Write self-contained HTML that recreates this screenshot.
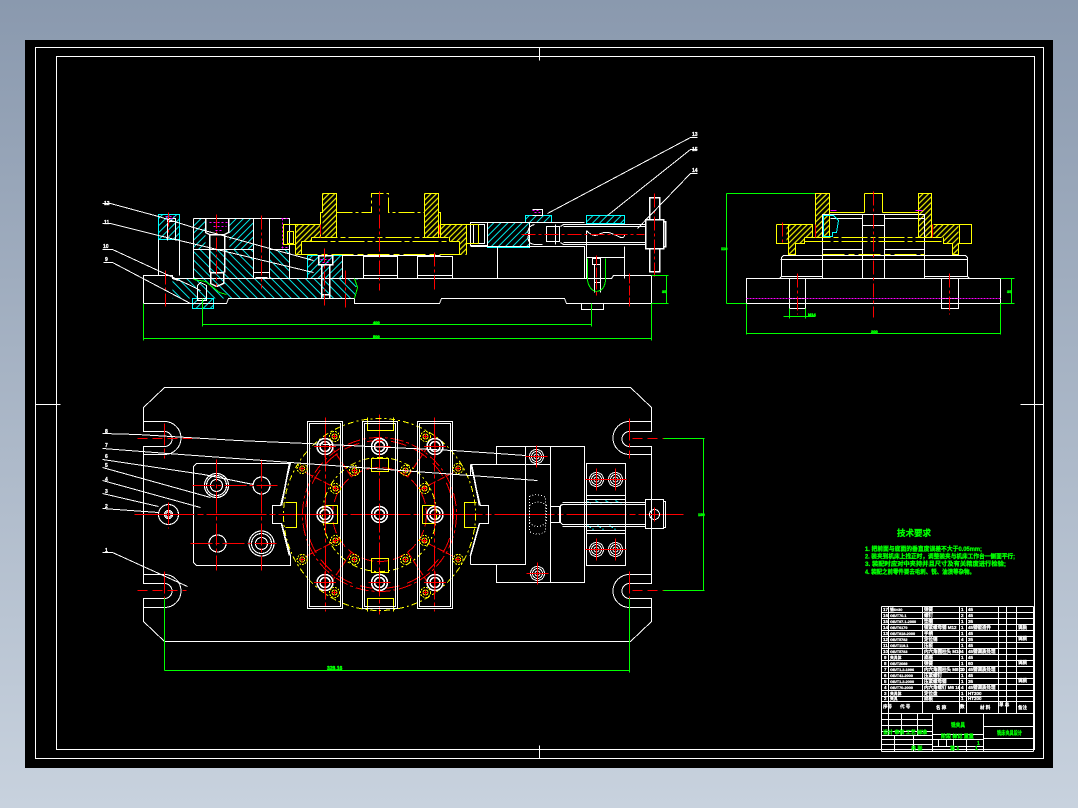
<!DOCTYPE html>
<html><head><meta charset="utf-8"><title>CAD</title>
<style>
html,body{margin:0;padding:0;width:1078px;height:808px;overflow:hidden;background:linear-gradient(#8a99ae,#c8d2de)}
svg{position:absolute;left:0;top:0}
text{font-family:"Liberation Sans","Noto Sans CJK SC",sans-serif;font-weight:bold}
.c{font-size:3.8px}
</style></head><body>
<svg width="1078" height="808" viewBox="0 0 1078 808" xmlns="http://www.w3.org/2000/svg">
<defs>
<pattern id="hc" width="5" height="5" patternUnits="userSpaceOnUse" patternTransform="rotate(45)"><line x1="1" y1="0" x2="1" y2="5" stroke="#00e8e8" stroke-width="1"/></pattern>
<pattern id="hb" width="6" height="6" patternUnits="userSpaceOnUse" patternTransform="rotate(-45)"><line x1="1" y1="0" x2="1" y2="6" stroke="#00e8e8" stroke-width="1"/></pattern>
<pattern id="hy" width="4" height="4" patternUnits="userSpaceOnUse" patternTransform="rotate(45)"><line x1="1" y1="0" x2="1" y2="4" stroke="#f0f000" stroke-width="1.2"/></pattern>
<g id="b"><circle r="8" fill="none" stroke="#fff" stroke-width="1.6"/><circle r="5" fill="none" stroke="#fff" stroke-width="1.6"/><path d="M-11 0H11M0-11V11" stroke="#f00"/></g>
<g id="s"><circle r="5" fill="none" stroke="#ff0" stroke-dasharray="2 1"/><circle r="2.5" fill="none" stroke="#ff0"/><path d="M-3 0H3M0-3V3" stroke="#f00"/></g>
<g id="m"><circle r="7" fill="none" stroke="#fff"/><circle r="5" fill="none" stroke="#fff"/><circle r="2.5" fill="none" stroke="#fff"/><path d="M-11 0H11M0-11V11" stroke="#f00"/></g>
</defs>
<rect x="25" y="40" width="1028" height="728" fill="#000"/>
<g transform="translate(.5 .5)" fill="none" stroke="#fff" shape-rendering="crispEdges">
<!-- frames -->
<rect x="35" y="47" width="1008" height="711"/>
<rect x="56" y="56" width="978" height="693"/>
<path d="M539 47V60M539 745V758M35 404H60M1020 404H1043"/>

<!-- SECTION VIEW: hatches -->
<g stroke="none">
<path fill="url(#hb)" d="M172 278H357L354 298H172ZM193 249H253V278H193ZM269 249H289V278H269Z"/>
<path fill="url(#hc)" d="M193 218H205V249H193ZM229 218H253V249H229Z"/>
<path fill="url(#hc)" d="M158 214H179V239H158ZM192 298H213V308H192ZM307 255H342V278H307ZM487 222H529V247H487ZM525 215H551V222H525ZM586 215H624V223H586Z"/>
<path fill="url(#hy)" d="M322 193H336V237H322ZM424 193H438V237H424ZM295 224H320V237H311V241H301V254H295ZM440 224H466V254H459V241H449V237H440Z"/>
<path fill="url(#hy)" d="M815 193H829V237H815ZM918 193H931V237H918ZM786 224H812V237H804V243H795V254H788V243H786ZM933 224H958V254H952V243H943V237H933Z"/>
</g>
<!-- section cyan outlines -->
<path stroke="#0ff" d="M158 214H179V239H158ZM192 298H213V308H192ZM193 218H205M229 218H253M307 255V278M342 255V278M307 255H342M487 222H529V247H487ZM525 215H551V222H525ZM586 215H624V223H586Z"/>
<!-- section white -->
<path d="M143 303H226L228 298H354V303H439L441 298H564L566 303H651V275H613L611 278H172V275H143Z M143 275V303"/>
<path d="M158 239V275M179 239V275M193 218H289V278M193 218V278M193 249H253M269 249H289M253 218H269V278H253ZM253 272H269M255 277H267"/>
<path stroke-width="1.5" d="M205 218V232L209 234H224L228 232V218M209 234V272M224 234V272M210 272H223M210 271V283L216 286L223 283V271"/>
<path d="M167 218H175V221H167ZM167 222V240M175 222V240"/>
<path stroke-width="1.5" d="M318 255H332V264H318ZM321 264V298M329 264V298M321 294H329"/>
<path d="M200 282L197 285V300H206V285ZM197 298H206"/>
<path d="M342 278V255H440M363 278V256H397V278M363 275H397M417 278V256H452V278M417 275H452"/>
<path d="M470 222H487V245H470ZM473 224H484V243H473ZM470 246H584V278M487 222H584M497 246V278M529 222V247M546 226H559V241H546Z"/>
<path d="M534 224Q526 226 528 234Q526 243 534 244H542M555 224V244"/>
<path stroke-width="1" d="M560 226L563 224H645M560 242L563 244H645M563 226H645M563 242H645M586 230V278M624 246V278M586 257H624"/>
<path d="M586 230Q592 237 598 234T608 232T618 236T624 234"/>
<path stroke-width="1.5" d="M645 219H663V248H645ZM649 197H659V219H649ZM649 248H659V271H649ZM663 221H665V246H663Z"/>
<path d="M592 258H600V264H592ZM594 264V292M600 264V292M594 282H600M532 209H542V215H532"/>
<path stroke="#0f0" d="M587 258V280Q589 290 596 291Q604 290 605 280V258"/>
<path d="M172 278L178 280M581 303V309H603V303"/>
<path stroke="#0f0" d="M193 279L205 281L219 292L226 294M354 278L357 287L354 298"/>
<!-- section yellow -->
<g stroke="#ff0">
<path stroke-width="1.3" d="M322 193H336V237M322 193V212H320V237M424 193H438V212H440V237M424 193V237M438 193V237"/>
<path stroke-width="1.3" d="M336 212H371V193H388V212H424" stroke-dasharray="16 3 3 3"/>
<path stroke-width="1.3" d="M311 237H449M301 241H459" stroke-dasharray="26 3 5 3"/>
<path stroke-width="1.3" d="M295 254H466" stroke-dasharray="22 4 6 4"/>
<path stroke-width="1.3" d="M301 241V254M295 224H320M295 244V254M311 237V241M449 237V241M459 241V254M466 224V254M440 224H466M283 224H295V244H283ZM287 231H293V243H287ZM466 224H478M466 243H478M478 224V243"/>
</g>
<g stroke="#f0f" stroke-dasharray="2 2"><path d="M281 218H288M281 247H288M282 218V248M209 222H228M213 226H226M215 230H222M320 259H330M322 262H330"/><path d="M532 210H540M534 212H540"/><path d="M166 218H174M165 216H174"/></g>
<g stroke="#f00"><path d="M168 212V236M216 214V286M261 215V288M324 248V305M379 191V290M345 270V309M434 252V292M165 270V306" stroke-dasharray="14 3 3 3"/><path d="M521 234H644" stroke-dasharray="14 3 3 3"/><path d="M654 193V276" stroke-dasharray="14 3 3 3"/><path d="M596 255V295M629 273V306M320 224V237M439 224V237" stroke-dasharray="10 2"/></g>
<!-- section leaders -->
<path d="M102 203H110L158 216L193 227L313 260M102 223H110L158 235L313 272M102 249H112L190 285L200 290M103 262H112L190 303M697 137H690L547 213M697 149H690L607 215M697 173H690L637 228"/>
<!-- section dims -->
<path stroke="#0f0" d="M202 298V326M202 324H591M591 303V326M143 303V340M143 338H651M651 303V340M651 275H668M651 303H668M666 275V303M726 193H820M726 303H746M726 193V303"/>

<!-- SIDE VIEW -->
<path d="M746 303V278H779L781 276V257L783 255H965L967 257V276L969 278H1000V303ZM780 259H967M781 276H822M924 276H967M746 278H1000"/>
<path d="M822 214H924V278H822ZM862 214H884V278H862ZM862 225H884M822 249H862M884 249H924M830 218H862M884 218H924"/>
<path d="M789 278V308H805V278M941 278V308H958V278M789 298H805M941 298H958"/>
<path stroke="#f0f" stroke-dasharray="2 1" d="M746 298H1000"/>
<g stroke="#ff0" stroke-width="1.3">
<path d="M815 193H829V237H815ZM815 193V212M918 193H931V237H918ZM864 193H882V212M864 193V212M829 212H864M882 212H918" stroke-dasharray="none"/>
<path d="M804 237H943M804 241H943" stroke-dasharray="26 3 5 3"/>
<path d="M822 254H924" stroke-dasharray="22 4 6 4"/>
<path d="M776 224H812V237M776 224V243H788V254H795V243H804V237M933 224H971V243H958V254H952V243H943V237M788 224V243M959 224V243"/>
</g>
<path stroke="#0ff" d="M823 215H833L838 220L836 232L832 232V236H823Z"/>
<g stroke="#f0f"><path d="M830 210H836M915 210H922"/></g>
<g stroke="#f00"><path d="M873 191V317M797 273V314M949 273V314M782 222V245M815 224V237M932 224V237" stroke-dasharray="14 3 3 3"/></g>
<path stroke="#0f0" d="M746 303V334M746 333H1000M1000 303V334M789 308V318M805 308V318M783 316H815M1000 278H1014M1000 303H1014M1011 278V303"/>

<!-- PLAN VIEW -->
<path d="M164 387H630L651 407V431H629M629 446H651V583H629M629 598H651V621L630 641H164L143 621V598H164M164 583H143V446H164M164 431H143V407L164 387"/>
<path d="M143 421H164A16.500 16.500 0 0 1 164 454H143M143 574H164A16.500 16.500 0 0 1 164 607H143"/>
<path d="M164 431A7.500 7.500 0 0 1 164 446M164 583A7.500 7.500 0 0 1 164 598"/>
<path d="M651 421H629A16.500 16.500 0 0 0 629 454H651M651 574H629A16.500 16.500 0 0 0 629 607H651"/>
<path d="M629 431A7.500 7.500 0 0 0 629 446M629 583A7.500 7.500 0 0 0 629 598"/>
<path d="M196 463H290L280 505H272V523H281L290 555V565H196L193 562V466Z"/>
<g stroke-width="1.2"><circle cx="216" cy="485" r="12"/><circle cx="216" cy="485" r="10"/><circle cx="216" cy="485" r="6"/><circle cx="261" cy="485" r="8.500"/><circle cx="217" cy="543" r="8.500"/><circle cx="261" cy="543" r="12.500"/><circle cx="261" cy="543" r="10"/><circle cx="261" cy="543" r="6"/><circle cx="168" cy="514" r="10"/><circle cx="168" cy="514" r="4"/><circle cx="168" cy="514" r="2.500"/></g>
<!-- center red/yellow -->
<g stroke="#f00">
<circle cx="379" cy="514" r="77" stroke-dasharray="13 3 3 3"/>
<circle cx="379" cy="514" r="74" stroke-dasharray="16 8"/>
<circle cx="379" cy="514" r="47" stroke-dasharray="12 4"/>
<path d="M330 445L352 478M428 445L406 478M330 583L352 550M428 583L406 550M305 472L340 490M453 472L418 490M305 556L340 538M453 556L418 538" stroke-dasharray="8 2"/>
<path d="M134 514H683" stroke-width="1.200" stroke-dasharray="60 3 6 3"/>
<path d="M379 414V614M325 417V611M434 417V611M216 459V570M261 459V570M168 502V528M192 485H277M190 543H278M164 423V458M164 571V606M629 418V458M629 571V606" stroke-dasharray="22 3 4 3"/>
<path d="M137 438H198M137 590H186M632 438H664M632 590H664" stroke-dasharray="10 5"/>
</g>
<g stroke="#ff0">
<circle cx="379" cy="514" r="96" stroke-dasharray="6 3 2 3"/>
<circle cx="379" cy="514" r="57" stroke-dasharray="6 3 2 3"/>
<path stroke-width="1.200" d="M367 417V430H393V417M367 611V598H393V611M325 505H337V523H325M434 505H422V523H434M371 458H388V471H371ZM371 558H388V572H371ZM285 502H296V527H285M476 502H464V527H476"/>
</g>
<path stroke-width="1.300" d="M307 421H342V608H307ZM309 423H340V606H309ZM362 421H397V608H362ZM364 423H395V606H364ZM417 421H452V608H417ZM419 423H450V606H419Z"/>
<g stroke-width="1.600"><path d="M289 463L281 505M281 523L289 555M471 464L479 505M479 523L470 555"/></g>
<use href="#b" x="324.500" y="446"/><use href="#b" x="379" y="446"/><use href="#b" x="434.500" y="446"/>
<use href="#b" x="324.500" y="514"/><use href="#b" x="379" y="514"/><use href="#b" x="434.500" y="514"/>
<use href="#b" x="324.500" y="582"/><use href="#b" x="379" y="582"/><use href="#b" x="434.500" y="582"/>
<use href="#s" x="301.700" y="468"/><use href="#s" x="457.700" y="468"/><use href="#s" x="301.700" y="559"/><use href="#s" x="457.700" y="559"/>
<use href="#s" x="334" y="436"/><use href="#s" x="425" y="436"/><use href="#s" x="334" y="592"/><use href="#s" x="425" y="592"/>
<use href="#s" x="354" y="470"/><use href="#s" x="405" y="470"/><use href="#s" x="354" y="559"/><use href="#s" x="405" y="559"/>
<use href="#s" x="335" y="488"/><use href="#s" x="424" y="488"/><use href="#s" x="335" y="540"/><use href="#s" x="424" y="540"/>
<!-- right side plan -->
<path d="M496 464V446H584V582H496V564M470 464H525M470 564H525V446M550 446V582M525 464H550" />
<path d="M470 464L480 505H488V523H479L470 555V564M470 464V475"/>
<path stroke-dasharray="1 2" d="M529 496Q537 492 545 497V531Q537 536 529 531ZM529 505Q537 498 546 505V522Q537 530 529 522Z"/>
<path d="M550 506H559V522H550ZM586 463H625V565H586ZM586 495H625M586 499H625M586 530H625M586 533H625"/>
<path stroke="#0ff" stroke-dasharray="4 2" d="M587 501L593 504M595 500L601 504M605 500L611 504M615 500L621 504M587 525L593 529M597 525L603 529M609 525L615 529"/>
<path stroke-width="1.300" d="M560 505L562 504H645V524H562L560 522ZM562 502H645M562 526H645M645 499H663V528H645ZM663 501H665V527H663"/>
<circle cx="654" cy="514" r="5"/>
<use href="#m" x="536" y="456"/><use href="#m" x="537" y="573"/>
<use href="#m" x="596" y="479"/><use href="#m" x="615" y="479"/><use href="#m" x="596" y="549"/><use href="#m" x="615" y="549"/>
<path stroke="#f00" d="M654 507V521"/>
<!-- plan leaders -->
<path d="M102 433L137 434L237 440L307 443L452 450L497 453L525 455M102 448L167 453L290 462L497 477L537 480M102 459L203 474L253 484M102 467L210 497M102 480L200 507M102 493L158 506M102 508L158 512M102 552H112L187 586"/>
<!-- plan dims -->
<path stroke="#0f0" stroke-width="1.200" d="M164 598V670M164 670H629M629 598V672M663 438H704M663 590H704M703 438V590"/>

<!-- TABLE -->
<path d="M881 606H1033M881 612H1033M881 618H1033M881 624H1033M881 630H1033M881 636H1033M881 642H1033M881 648H1033M881 654H1033M881 660H1033M881 666H1033M881 672H1033M881 678H1033M881 684H1033M881 690H1033M881 696H1033M881 701H1033M881 713H1033"/>
<path d="M881 606V751M888 606V713M922 606V713M959 606V713M966 606V713M998 606V713M1006 606V713M1016 606V713M1033 606V751M881 751H1033"/>
<path d="M932 713V751M983 713V751M983 726H1033M983 738H1033M932 734H983M932 739H983M932 746H983M938 739V746M946 739V746M953 739V751M966 739V751M881 719H932M881 725H932M881 731H932M881 735H932M881 739H932M881 744H932M888 713V735M901 713V735M917 713V735M913 735V751M894 735V751"/>
</g>

<!-- TEXT -->
<g fill="#fff" stroke="#fff" stroke-width=".3" font-size="5">
<text x="104" y="205">12</text><text x="104" y="224">11</text><text x="103" y="248">10</text><text x="105" y="261">9</text>
<text x="692" y="136">13</text><text x="692" y="151">15</text><text x="692" y="172">14</text>
<text x="105" y="433">8</text><text x="105" y="447">7</text><text x="105" y="458">6</text><text x="105" y="467">5</text><text x="105" y="481">4</text><text x="105" y="493">3</text><text x="105" y="508">2</text><text x="105" y="552">1</text>
</g>
<g fill="#0f0" stroke="#0f0" stroke-width=".5" font-size="4">
<text x="373" y="324">400</text><text x="373" y="338">500</text><text x="662" y="293">35</text>
<text x="721" y="250">110</text><text x="1007" y="293">35</text><text x="808" y="316">M14</text><text x="871" y="333">200</text>
<text x="327" y="670" font-size="5">328.16</text><text x="698" y="516">150</text>
</g>
<g fill="#0f0" stroke="#0f0" stroke-width=".3">
<text x="897" y="536" font-size="8.500">技术要求</text>
<g font-size="6">
<text x="865" y="551" textLength="117" lengthAdjust="spacingAndGlyphs">1. 把前面与底面的垂直度误差不大于0.05mm;</text>
<text x="865" y="558.500" textLength="150" lengthAdjust="spacingAndGlyphs">2. 装夹到机床上找正时，调整装夹与机床工作台一侧面平行;</text>
<text x="865" y="566" textLength="141" lengthAdjust="spacingAndGlyphs">3. 装配时应对中夹持并且尺寸及有关精度进行检验;</text>
<text x="865" y="574" textLength="110" lengthAdjust="spacingAndGlyphs">4. 装配之前零件要去毛刺、锐、油渍等杂物。</text>
</g>
<text x="951" y="727" font-size="5.500" textLength="14" lengthAdjust="spacingAndGlyphs">铣夹具</text>
<text x="997" y="735" font-size="5.500" textLength="25" lengthAdjust="spacingAndGlyphs">铣床夹具设计</text>
<text x="883" y="734" font-size="5">设计 审核 工艺 标准</text>
<text x="941" y="738" font-size="5">阶段 标记 重量</text>
<text x="977" y="745" font-size="5">1</text>
<text x="911" y="750" font-size="5">共 张</text><text x="950" y="750" font-size="5">第 1</text><text x="975" y="750" font-size="5">1</text>
</g>
<g fill="#fff" stroke="#fff" stroke-width=".25" font-size="4.5">
<text x="883" y="611">17</text><text class="c" x="890" y="611">销6×30</text><text x="924" y="611">弹簧</text><text x="961" y="611">1</text><text x="968" y="611">45</text>
<text x="883" y="617">16</text><text class="c" x="890" y="617">GB/T70.1</text><text x="924" y="617">螺钉</text><text x="961" y="617">2</text><text x="968" y="617">45</text>
<text x="883" y="623">15</text><text class="c" x="890" y="623">GB/T97.1-2000</text><text x="924" y="623">垫圈</text><text x="961" y="623">1</text><text x="968" y="623">35</text>
<text x="883" y="629">14</text><text class="c" x="890" y="629">GB/T6170</text><text x="924" y="629">锁紧螺母钢 M12</text><text x="961" y="629">1</text><text x="968" y="629">45钢锻造件</text>
<text x="883" y="635">13</text><text class="c" x="890" y="635">GB/T818-2000</text><text x="924" y="635">手柄</text><text x="961" y="635">1</text><text x="968" y="635">45</text>
<text x="883" y="641">12</text><text class="c" x="890" y="641">GB/T5782</text><text x="924" y="641">定位销</text><text x="961" y="641">4</text><text x="968" y="641">35</text>
<text x="883" y="647">11</text><text class="c" x="890" y="647">GB/T119.1</text><text x="924" y="647">压板</text><text x="961" y="647">1</text><text x="968" y="647">45</text>
<text x="883" y="653">10</text><text class="c" x="890" y="653">GB/T5783</text><text x="924" y="653">内六角圆柱头 M10</text><text x="961" y="653">4</text><text x="968" y="653">45钢调质处理</text>
<text x="884" y="659">9</text><text class="c" x="890" y="659">夹具体</text><text x="924" y="659">底座</text><text x="961" y="659">1</text><text x="968" y="659">45</text>
<text x="884" y="665">8</text><text class="c" x="890" y="665">GB/T2089</text><text x="924" y="665">弹簧</text><text x="961" y="665">1</text><text x="968" y="665">60</text>
<text x="884" y="671">7</text><text class="c" x="890" y="671">GB/T1.2-1996</text><text x="924" y="671">内六角圆柱头 M8 10</text><text x="961" y="671">2</text><text x="968" y="671">45钢调质处理</text>
<text x="884" y="677">6</text><text class="c" x="890" y="677">GB/T41-2000</text><text x="924" y="677">压紧螺钉</text><text x="961" y="677">1</text><text x="968" y="677">45</text>
<text x="884" y="683">5</text><text class="c" x="890" y="683">GB/T1.2-2000</text><text x="924" y="683">压紧螺母钢</text><text x="961" y="683">1</text><text x="968" y="683">35</text>
<text x="884" y="689">4</text><text class="c" x="890" y="689">GB/T70-2000</text><text x="924" y="689">内六角螺钉 M6 16</text><text x="961" y="689">4</text><text x="968" y="689">45钢调质处理</text>
<text x="884" y="695">3</text><text class="c" x="890" y="695">夹具体</text><text x="924" y="695">定位盘</text><text x="961" y="695">1</text><text x="968" y="695">HT200</text>
<text x="884" y="700">2</text><text class="c" x="890" y="700">夹具</text><text x="924" y="700">底板</text><text x="961" y="700">1</text><text x="968" y="700">HT200</text>
<text x="1018" y="629">调质</text><text x="1018" y="640">调质</text><text x="1018" y="664">调质</text><text x="1018" y="682">调质</text>
<text x="883" y="708">序号</text><text x="900" y="708">代 号</text><text x="936" y="709">名 称</text><text x="960" y="708">数</text><text x="980" y="709">材 料</text><text x="999" y="706">单 总</text><text x="1018" y="709">备注</text>
</g>
</svg>
</body></html>
